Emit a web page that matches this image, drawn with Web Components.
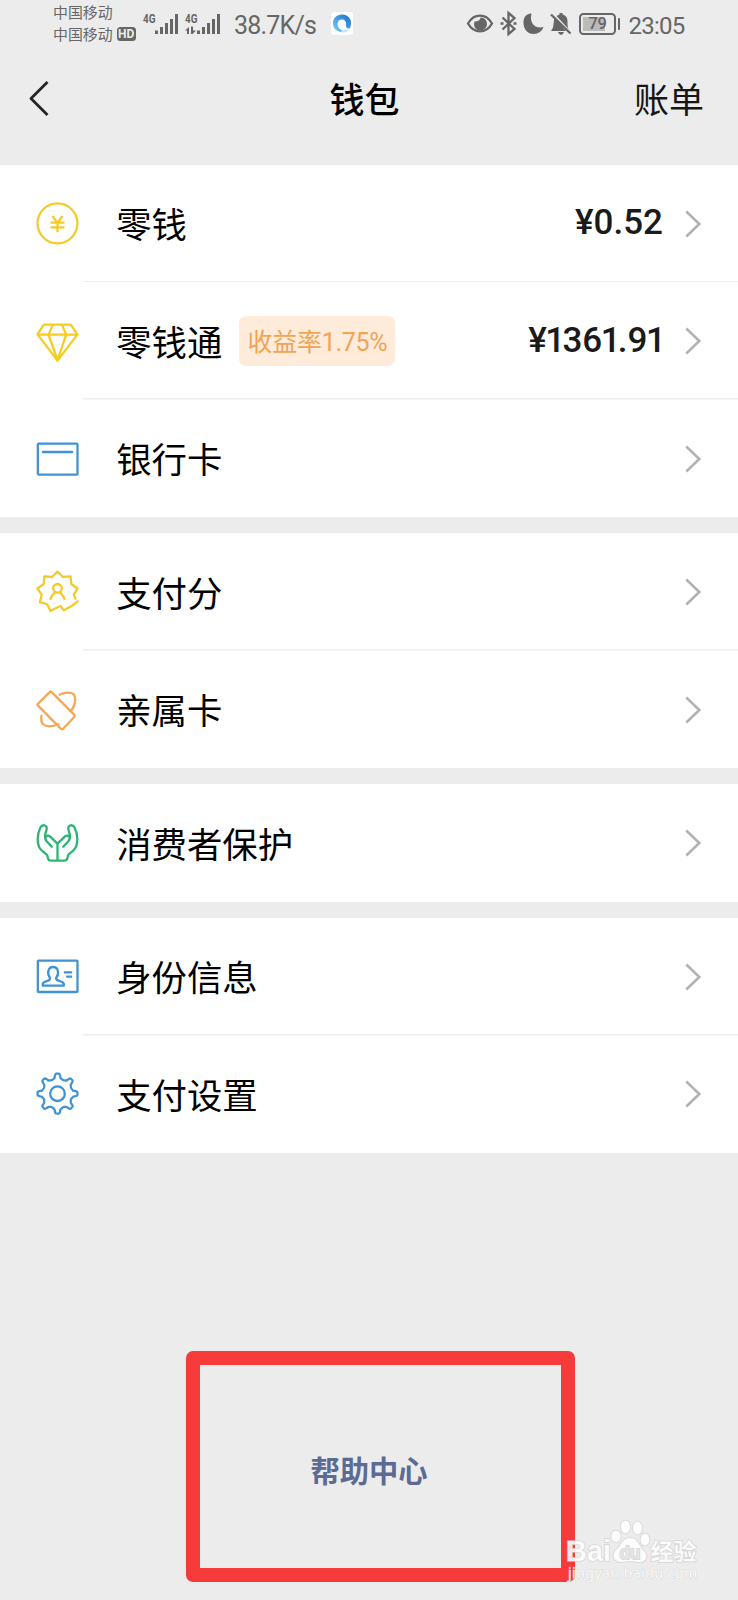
<!DOCTYPE html>
<html lang="zh-CN">
<head>
<meta charset="utf-8">
<title>钱包</title>
<style>
html,body{margin:0;background:#ececec}
body{font-family:Roboto,"Noto Sans CJK SC",sans-serif;color:#000}
</style>
</head>
<body>
<wallet-page></wallet-page>
<script>
const define = (name, html) => customElements.define(name, class extends HTMLElement {
  constructor() {
    super();
    const t = document.createElement('template');
    t.innerHTML = typeof html === 'function' ? html(this) : html;
    this.attachShadow({ mode: 'open' }).append(t.content.cloneNode(true));
  }
});

const polar = (cx, cy, r, deg) => {
  const a = deg * Math.PI / 180;
  return (cx + r * Math.sin(a)).toFixed(1) + ' ' + (cy - r * Math.cos(a)).toFixed(1);
};

// Rosette outline with nine points, left open at the lower right for the tick.
const rosette = () => {
  const p = [];
  for (let i = -4; i <= 2; i++) {
    p.push(polar(113, 518, 61, i * 40));
    if (i < 2) p.push(polar(113, 518, 48, i * 40 + 20));
  }
  return 'M116 562 L' + p.join(' L') + ' L' + polar(113, 518, 50, 99) + ' L' + polar(113, 518, 57, 110);
};

// Eight rounded teeth.
const gear = () => {
  let d = '';
  for (let i = 0; i < 8; i++) {
    const a = i * 45;
    d += (i ? 'L' : 'M') + polar(113, 463, 46, a - 15) +
      'Q' + polar(113, 463, 47, a - 10) + ' ' + polar(113, 463, 52, a - 9) +
      'L' + polar(113, 463, 57, a - 7) +
      'Q' + polar(113, 463, 60, a - 6) + ' ' + polar(113, 463, 60, a - 3) +
      'L' + polar(113, 463, 60, a + 3) +
      'Q' + polar(113, 463, 60, a + 6) + ' ' + polar(113, 463, 57, a + 7) +
      'L' + polar(113, 463, 52, a + 9) +
      'Q' + polar(113, 463, 47, a + 10) + ' ' + polar(113, 463, 46, a + 15) +
      'Q' + polar(113, 463, 42, a + 22.5) + ' ' + polar(113, 463, 46, a + 30);
  }
  return d + 'Z';
};

const ICONS = {
  coin: ['#f4cb26', 65, '<circle cx="113" cy="129" r="60"/><path d="M98 107l15 21 15-21M113 128v28M92 127h42M92 141h42" stroke-linecap="butt"/>'],
  gem: ['#f6cc1e', 417, '<path d="M72 434H153L173 463L113 542L53 463ZM53 464H173M98 436L86 464L113 540L139 464L127 436"/>'],
  card: ['#3f93d2', 49, '<rect x="54" y="69" width="119" height="93" rx="3"/><path d="M69 94H157"/>'],
  score: ['#f4ca26', 452, `<path d="${rosette()}"/><circle cx="113" cy="507" r="13"/><path d="M92 539Q97 525 107 519M119 519Q129 525 134 539M122 560L132 573Q157 561 174 546"/>`],
  family: ['#f2a854', 54, '<path d="M91 65L54 102Q52 104 54 106L122 175Q126 180 130 176L164 140Q166 137 163 134L94 65Q92 63 91 65Z"/><path d="M119 74C144 63 166 67 166 86C167 101 160 117 152 123M65 137C61 161 72 168 87 169C101 169 110 166 116 163"/>'],
  hands: ['#2ab573', 454, '<path d="M113 572V522L91 501C82 493 72 504 79 513L96 531M79 512C73 503 75 497 80 480C84 467 69 462 62 473C53 492 51 512 57 530C61 542 77 550 82 556L85 568Q87 573 94 573H133Q140 573 142 568L145 556C150 550 165 542 169 530C175 512 173 492 164 473C157 462 142 467 146 480C151 497 153 503 147 512M113 522L135 501C144 493 154 504 147 513L130 531"/>'],
  ident: ['#3f93d2', 46, '<rect x="54" y="63" width="119" height="94" rx="2"/><path d="M132 98H157M139 111H157" stroke-linecap="butt"/><path d="M90 114C82 104 83 82 100 82C117 82 118 104 109 114Q108 121 116 123L127 127Q133 130 132 138H69Q67 130 74 127L85 123Q92 121 90 114Z"/>'],
  gear: ['#3f93d2', 398, `<path d="${gear()}"/><circle cx="113" cy="463" r="22"/>`]
};

define('wallet-icon', el => {
  const [color, y, body] = ICONS[el.getAttribute('name')];
  return `<style>:host{display:block;width:44px;height:44px}svg{display:block}</style>
  <svg width="44" height="44" viewBox="48.5 ${y} 132 132" fill="none" stroke="${color}" stroke-width="6.8" stroke-linejoin="round" stroke-linecap="round">${body}</svg>`;
});

define('wallet-row', el => `<style>
  :host{display:flex;height:117.5px;box-sizing:border-box;padding-left:35.7px;background:#fff}
  .main{flex:1;display:flex;align-items:center;position:relative}
  :host([line]){background:linear-gradient(#eee,#eee) 83px 100%/100% 1.5px no-repeat #fff}
  .label{margin:-1px 0 0 36.5px;font:400 35.4px/50px "Noto Sans CJK SC",sans-serif;white-space:nowrap}
  .end{margin:-1px 22px 0 auto}
  svg{display:block;margin-right:35px}
  </style>
  <div class="main"><wallet-icon name="${el.getAttribute('icon')}"></wallet-icon>
  <span class="label">${el.getAttribute('label')}</span><slot></slot><div class="end"><slot name="value"></slot></div>
  <svg width="18" height="30" viewBox="0.700 0 18 30" fill="none" stroke="#b2b2b2" stroke-width="2.6"><path d="M2 2.5L15 15L2 27.5"/></svg></div>`);

define('yield-tag', `<style>:host{display:flex;align-items:center;justify-content:center;width:156px;height:50px;border-radius:7px;background:#feebda;color:#f0a555;margin:0 0 0 17px;font:400 25px/50px Roboto,"Noto Sans CJK SC",sans-serif;letter-spacing:-.3px;white-space:nowrap}span{margin-top:3px}</style><span><slot></slot></span>`);

define('money-amount', `<style>:host{display:block;font:500 35px/50px Roboto,sans-serif;color:#1a1a1a;white-space:nowrap}</style><slot></slot>`);

define('wallet-group', `<style>:host{display:block;background:#fff}</style><slot></slot>`);

define('signal-bars', el => `<style>:host{display:block}svg{display:block;font:700 12.5px Roboto,sans-serif}</style>
  <svg width="36" height="24" viewBox="0 0 36 24" fill="#666"><text x="0" y="10.5" textLength="12.5" lengthAdjust="spacingAndGlyphs">4G</text>
  <path d="M12 18.5h3v3.5h-3zM17 15h3v7h-3zM22 11h3v11h-3zM27 7h3v15h-3zM32 2h3v20h-3z"/>
  ${el.hasAttribute('data') ? '<path d="M0 18.500l4-3.500v7H2v-3.500zM6 14.500v7.500h1.500l3.500-3.500h-3v-4z"/>' : ''}</svg>`);

define('status-bar', `<style>
  :host{display:flex;height:50px;color:#666;padding-left:53px;box-sizing:border-box}
  svg{display:block;flex:none}
  .carriers{font:400 14.9px/21.5px "Noto Sans CJK SC",sans-serif;padding-top:1px;width:90px;white-space:nowrap}
  .line{display:flex;align-items:center}
  .hd{font:700 12px/14px Roboto,sans-serif;color:#ececec;background:#666;border-radius:3.500px;width:19px;text-align:center;margin-left:4px;margin-top:2px}
  signal-bars{margin:12px 6px 0 0}
  .speed,.time{font:400 25px/30px Roboto,sans-serif;letter-spacing:-.8px;white-space:nowrap}
  .speed{margin:11px 0 0 7px;width:97px}
  .time{font-size:24px;letter-spacing:-.75px;margin:11px 0 0 8px}
  .browser{margin-top:12px}
  .sys{display:flex;margin-left:auto;margin-right:53.500px}
  .bat{box-sizing:border-box;width:37px;height:22px;border:2px solid #666;border-radius:4.500px;margin:13px 0 0 1px;font:500 16.500px/18.500px Roboto,sans-serif;letter-spacing:-.5px;text-align:center;background:linear-gradient(#bbb,#bbb) 2px 2px/22px 14px no-repeat}
  .cap{width:2.500px;height:12px;border-radius:1px;background:#666;margin:18px 0 0 2px}
  </style>
  <div class="carriers"><div class="line">中国移动</div><div class="line">中国移动<span class="hd">HD</span></div></div>
  <signal-bars></signal-bars><signal-bars data></signal-bars>
  <div class="speed">38.7K/s</div>
  <svg class="browser" width="22" height="23" viewBox="0 0 22 23"><defs><linearGradient id="g" x1="0" y1="1" x2="1" y2="0"><stop offset="0" stop-color="#7cd3fa"/><stop offset="1" stop-color="#1767c9"/></linearGradient></defs><rect width="22" height="23" rx="3" fill="#fbfdff"/><path d="M10 20C4 19 2 15 2 11C2 6 6 2.500 11 2.500C17 2.500 20 7 20 11C20 13 19.500 15 18.500 16.500C17 17 14 15 15 12C15 9 13.500 7.500 11 7.500C8 7.500 6.500 9.500 6.500 12C6.500 15 9 18 12 18.500Z" fill="url(#g)"/><path d="M10 20C12 16.500 16 18.500 18 18C16 20.500 12 21 10 20Z" fill="#bfe6fb"/></svg>
  <div class="sys">
    <svg width="112" height="50" viewBox="466 0 112 50" fill="none" stroke="#666" stroke-width="2.300">
      <path d="M468 23.500C474 13 486 13 492 23.500C486 34 474 34 468 23.500Z"/><path d="M480.500 17.500C480 21 477 21.500 474.500 21.500C473 27 476 30.500 480 30.500C484 30.500 487 27.500 487 24C487 20.500 484.500 17.500 480.500 17.500Z" fill="#666" stroke="none"/>
      <path d="M502.500 17.500L514.500 29L508.500 34V13L514.500 18L502.500 29.500M500.500 23.500h3M513.500 23.500h3"/>
      <path d="M531.500 13.500C525 14 523.500 18 523.500 23C523.500 29.500 528 34 533.500 34C538.500 34 542 31 543.500 27C535 29 529 23 531.500 13.500Z" fill="#666" stroke="none"/>
      <path d="M556.500 16L569 29.500C567.500 28 567.500 25 567.500 21C567.500 17 565 15 562.500 14.500V13H559.500V14.500ZM554.500 18C553.500 20 554 26 552.500 28.500L551 31H566ZM558 32h6q-1 3-3 3t-3-3Z" fill="#666" stroke="none"/><path d="M551 14.500L570.500 33.500"/>
    </svg>
    <div class="bat">79</div><div class="cap"></div><div class="time">23:05</div>
  </div>`);

define('nav-bar', `<style>
  :host{display:grid;grid-template-columns:1fr auto 1fr;height:114.800px;padding:0 34px 0 27px;box-sizing:border-box;font:400 35px/50px "Noto Sans CJK SC",sans-serif}
  svg{display:block;margin-top:30px}
  h1{font:500 35px/50px "Noto Sans CJK SC",sans-serif;margin:23px 0 0 -2px}
  .bill{text-align:right;margin-top:23px;color:#161616}
  </style>
  <svg width="24" height="38" viewBox="0 0 24 38" fill="none" stroke="#252525" stroke-width="2.800" stroke-linejoin="round"><path d="M20.500 2L4 18.500L20.500 35"/></svg>
  <h1>钱包</h1><span class="bill">账单</span>`);

define('focus-frame', `<style>:host{display:block;position:absolute;left:186px;top:1351px;width:389px;height:231px;border-radius:7px;box-sizing:border-box;border:14px solid #f73a3a}</style>`);

define('site-mark', `<style>:host{display:block;position:absolute;left:564px;top:1516px;width:140px;height:68px}
  svg{display:block}text{font-family:"Liberation Sans","Noto Sans CJK SC",sans-serif}</style>
  <svg width="140" height="68" viewBox="0 0 140 68" fill="#fff" fill-opacity=".85" stroke="#cfcfcf" stroke-opacity=".75" stroke-width="1.600" paint-order="stroke">
  <text x="2" y="45" font-size="29" font-weight="700" textLength="45" lengthAdjust="spacingAndGlyphs">Bai</text>
  <ellipse cx="52" cy="20.500" rx="4.700" ry="6"/><ellipse cx="61.500" cy="11" rx="4.700" ry="6.500"/><ellipse cx="73.500" cy="12" rx="4.700" ry="6.500"/><ellipse cx="81" cy="23.500" rx="4.500" ry="6"/>
  <path d="M66 22C74 22 75 30 80 35C86 42 80 47 74 46C69 45 62 45 58 46C51 47 46 40 52 34C57 30 58 22 66 22Z"/>
  <text x="55.500" y="42.500" font-size="18.500" font-weight="700" textLength="21" lengthAdjust="spacingAndGlyphs" fill="#e6e6e6" fill-opacity="1" stroke="#c4c4c4">du</text>
  <text x="86.500" y="43.500" font-size="23" font-weight="700" textLength="46" lengthAdjust="spacingAndGlyphs">经验</text>
  <text x="4" y="62" font-size="14" textLength="129" lengthAdjust="spacing" stroke-width=".8" style="font-family:'Noto Sans',sans-serif">jingyan.baidu.com</text></svg>`);

define('wallet-page', `<style>
  :host{display:block;position:relative;width:738px;height:1600px;overflow:hidden;background:#ececec}
  .groups{display:grid;gap:16.100px}
  .one{letter-spacing:-2.800px;margin-left:-1.500px}
  .help{display:block;text-align:center;margin-top:295px;font:700 29.300px/42px "Noto Sans CJK SC",sans-serif;color:#5b6b94}
  </style>
  <status-bar></status-bar><nav-bar></nav-bar>
  <div class="groups">
    <wallet-group>
      <wallet-row line icon="coin" label="零钱"><money-amount slot="value">¥0.52</money-amount></wallet-row>
      <wallet-row line icon="gem" label="零钱通"><yield-tag>收益率1.75%</yield-tag><money-amount slot="value">¥<span class="one">1</span>36<span class="one">1</span>.9<span class="one">1</span></money-amount></wallet-row>
      <wallet-row icon="card" label="银行卡"></wallet-row>
    </wallet-group>
    <wallet-group>
      <wallet-row line icon="score" label="支付分"></wallet-row>
      <wallet-row icon="family" label="亲属卡"></wallet-row>
    </wallet-group>
    <wallet-group><wallet-row icon="hands" label="消费者保护"></wallet-row></wallet-group>
    <wallet-group>
      <wallet-row line icon="ident" label="身份信息"></wallet-row>
      <wallet-row icon="gear" label="支付设置"></wallet-row>
    </wallet-group>
  </div>
  <span class="help">帮助中心</span>
  <focus-frame></focus-frame><site-mark></site-mark>`);
</script>
</body>
</html>
